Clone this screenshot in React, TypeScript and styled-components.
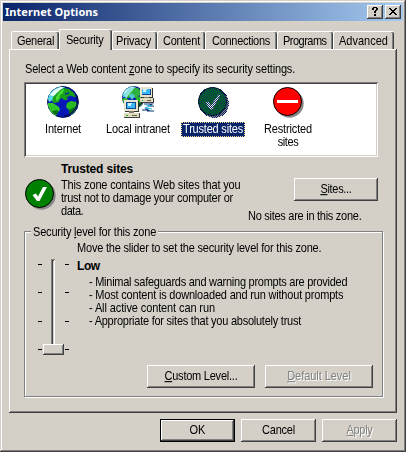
import React from "react";
import styled, { createGlobalStyle, css } from "styled-components";

const face = "#d4d0c8";
const shadow = "#808080";
const dark = "#404040";

const raised = css`
  box-shadow: inset -1px -1px 0 ${dark}, inset 1px 1px 0 #fff, inset -2px -2px 0 ${shadow};
`;

const Global = createGlobalStyle`
  body { margin: 0; background: ${face}; }
  * { box-sizing: border-box; }
`;

const Window = styled.div`
  width: 406px;
  height: 452px;
  padding: 3px;
  background: ${face};
  color: #000;
  font: 11px/13px "Liberation Sans", Arial, sans-serif;
  box-shadow: inset -1px -1px 0 ${dark}, inset 1px 1px 0 ${face}, inset -2px -2px 0 ${shadow}, inset 2px 2px 0 #fff;
`;

const Text = styled.span<{ $ls?: number; $bold?: boolean }>`
  display: block;
  width: max-content;
  white-space: nowrap;
  letter-spacing: ${(p) => p.$ls ?? -0.2}px;
  font-size: ${(p) => (p.$bold ? 12 : 11)}px;
  font-weight: ${(p) => (p.$bold ? 700 : 400)};
  transform: scaleY(${(p) => (p.$bold ? 1 : 1.1)});
  transform-origin: 0 10px;
`;

const Key = styled.span`
  text-decoration: underline;
  text-decoration-thickness: 1px;
  text-underline-offset: 1px;
  text-decoration-skip-ink: none;
`;

const TitleBar = styled.header`
  display: flex;
  align-items: center;
  height: 18px;
  padding: 0 2px;
  background: linear-gradient(90deg, #0a246a, #a6caf0);
`;

const Title = styled.h1`
  flex: 1;
  margin: 0;
  color: #fff;
  font: bold 11px/16px "Noto Sans", sans-serif;
  letter-spacing: 0.05px;
`;

const CaptionButton = styled.button`
  width: 16px;
  height: 14px;
  margin-left: 2px;
  padding: 0;
  border: 0;
  background: ${face};
  ${raised}
  svg { display: block; }
`;

const Tabs = styled.nav`
  position: relative;
  z-index: 1;
  display: flex;
  align-items: flex-end;
  height: 29px;
  padding-left: 8px;
`;

const Tab = styled.div<{ $w: number; $pad: number; $on?: boolean }>`
  width: ${(p) => p.$w}px;
  height: ${(p) => (p.$on ? 21 : 18)}px;
  margin-bottom: ${(p) => (p.$on ? 0 : 1)}px;
  padding: ${(p) => (p.$on ? 4 : 3)}px 0 0 ${(p) => p.$pad - 1}px;
  background: ${face};
  border-top: 1px solid #fff;
  border-left: 1px solid #fff;
  border-radius: 2px 2px 0 0;
  box-shadow: inset -1px 0 0 ${dark}, inset -2px 0 0 ${shadow};
`;

const Panel = styled.main`
  width: 388px;
  height: 364px;
  margin: -1px 0 0 6px;
  padding: 14px 14px 0 15px;
  ${raised}
`;

const Intro = styled.div`
  padding-left: 1px;
`;

const ZoneList = styled.div`
  display: flex;
  gap: 1px;
  width: 354px;
  height: 75px;
  margin-top: 6px;
  padding: 4px 0 0 2px;
  background: #fff;
  box-shadow: inset 1px 1px 0 ${shadow}, inset -1px -1px 0 #fff, inset 2px 2px 0 ${dark}, inset -2px -2px 0 ${face};
`;

const Zone = styled.div`
  display: flex;
  flex-direction: column;
  align-items: center;
  width: 74px;
  svg { display: block; flex: none; }
`;

const ZoneLabel = styled.div<{ $on?: boolean }>`
  display: flex;
  flex-direction: column;
  align-items: center;
  width: ${(p) => (p.$on ? "64px" : "auto")};
  height: ${(p) => (p.$on ? "15px" : "auto")};
  margin-top: 4px;
  padding: 1px 0;
  color: ${(p) => (p.$on ? "#fff" : "#000")};
  background: ${(p) => (p.$on ? "#0a246a" : "transparent")};
  outline: ${(p) => (p.$on ? "1px dotted #f5db95" : "none")};
  outline-offset: -1px;
`;

const Details = styled.section`
  display: flex;
  width: 354px;
  height: 69px;
`;

const DetailIcon = styled.div`
  width: 37px;
  padding-top: 21px;
  svg { display: block; }
`;

const DetailText = styled.div`
  width: 187px;
  padding-top: 6px;
`;

const Description = styled.div`
  margin-top: 3px;
`;

const SitesColumn = styled.div`
  display: flex;
  flex: 1;
  flex-direction: column;
  align-items: flex-end;
  padding-top: 21px;
`;

const SitesNote = styled.div`
  width: 130px;
  margin-top: 9px;
`;

const Button = styled.button<{ $w: number; $default?: boolean }>`
  display: flex;
  justify-content: center;
  width: ${(p) => p.$w}px;
  height: 23px;
  padding: 5px 0 0;
  border: 0;
  background: ${face};
  color: #000;
  font: inherit;
  ${raised}
  ${(p) =>
    p.$default &&
    css`
      box-shadow: inset 0 0 0 1px #000, inset -2px -2px 0 ${dark}, inset 2px 2px 0 #fff, inset -3px -3px 0 ${shadow};
    `}
  &:disabled {
    color: ${shadow};
    text-shadow: 1px 1px 0 #fff;
  }
`;

const Group = styled.section`
  width: 359px;
  height: 166px;
  margin-top: 5px;
  border: 1px solid ${shadow};
  box-shadow: 1px 1px 0 #fff, inset 1px 1px 0 #fff;
`;

const Legend = styled.div`
  width: 127px;
  height: 13px;
  margin: -6px 0 0 6px;
  padding-left: 2px;
  background: ${face};
`;

const Level = styled.div`
  display: flex;
  height: 126px;
`;

const Slider = styled.div`
  position: relative;
  display: flex;
  width: 52px;
  padding: 20px 0 0 13px;
`;

const Ticks = styled.div`
  display: flex;
  flex-direction: column;
  justify-content: space-between;
  width: 4px;
  height: 86px;
  margin-top: 5px;
`;

const Tick = styled.i`
  height: 1px;
  background: #000;
`;

const Track = styled.div`
  width: 4px;
  height: 92px;
  margin: 0 10px 0 9px;
  background: ${face};
  box-shadow: inset 1px 1px 0 ${shadow}, inset -1px -1px 0 #fff, inset 2px 2px 0 ${dark};
`;

const Thumb = styled.div`
  position: absolute;
  left: 18px;
  top: 105px;
  width: 21px;
  height: 11px;
  background: ${face};
  ${raised}
`;

const LevelText = styled.div`
  padding-top: 3px;
`;

const LevelName = styled.div`
  margin-top: 5px;
`;

const Bullets = styled.div`
  margin: 3px 0 0 12px;
`;

const LevelButtons = styled.div`
  display: flex;
  gap: 10px;
  padding-left: 122px;
`;

const Footer = styled.footer`
  display: flex;
  justify-content: flex-end;
  gap: 6px;
  padding: 6px 6px 0 0;
`;

const Globe = () => (
  <>
    <circle cx="16" cy="16" r="15.4" fill="#0818b8" stroke="#001050" strokeWidth="1" />
    <path d="M1 13C2 7 7 2 13 1l5 0-4 4-5 4-1 4-6 3z" fill="#58dce8" />
    <path d="M2.500 9l5-5 6-3 3 0-4 4-6 5z" fill="#e8fff8" />
    <path d="M13 4l4-2 5 1 5 4 2 4-2 0-2-1-3 1-2 3-3 0-2-2-2 1-1 3-4 1-3-1 1-5z" fill="#18a018" />
    <path d="M9 11l4-6 4-2-1 4-3 2-1 4-3 2z" fill="#48d838" />
    <path d="M1 17l5 0 6 4 1 3-3 3-1 3-5-4-3-6z" fill="#30c828" />
    <path d="M5 25l6-1-1 5-3-1z" fill="#087010" />
    <path d="M20 17l4-2 5 1 2 2-3 7-4 4-2-5-3-3z" fill="#28b820" />
    <path d="M22 24l6-3-3 6-3 2z" fill="#087010" />
    <path d="M18 8l4-1M20 12l4-2" stroke="#0830a0" strokeWidth="1.5" />
    <path d="M29 9a15 15 0 0 1-12 21" fill="none" stroke="#000858" strokeWidth="1.3" />
  </>
);

const InternetIcon = () => (
  <svg width="32" height="32" viewBox="0 0 32 32"><Globe /></svg>
);

const Computer = () => (
  <g shapeRendering="crispEdges">
    <path d="M0 0h15v12H0z" fill="#e8e4cc" />
    <path d="M15 1h1v12H1v-1h14z" fill="#303030" />
    <path d="M2 2h11v8H2z" fill="#104890" />
    <path d="M3 3h9v6H3z" fill="#38b8f8" />
    <path d="M4 3h5v1H7v2H4z" fill="#c8f4ff" />
    <path d="M5 12h6v2H5z" fill="#807c68" />
    <path d="M0 14h16v4H0z" fill="#e0dcc0" />
    <path d="M0 18h16v1H0zM16 14h1v5h-1z" fill="#404040" />
    <path d="M9 16h5v1H9z" fill="#606048" />
    <path d="M2 16h2v1H2z" fill="#20b020" />
  </g>
);

const IntranetIcon = () => (
  <svg width="32" height="32" viewBox="0 0 32 32">
    <g transform="scale(.72)"><Globe /></g>
    <path d="M2 8l5-6 7-1-6 6-4 6z" fill="#90e0e0" />
    <path d="M11 3l5-1 3 5-4 6-4-2z" fill="#30b040" />
    <path d="M7 10l3-3 3 3-3 4z" fill="#50c8d8" />
    <g transform="translate(18 1) scale(.82)"><Computer /></g>
    <g transform="translate(2 14) scale(.94)"><Computer /></g>
    <path d="M22 18h8l-3 2h5M20 24h6l-3-2M25 25h7" fill="none" stroke="#083878" strokeWidth="1.2" />
    <path d="M24 19l5 1-6 2 7 1" fill="none" stroke="#38b8e8" />
  </svg>
);

// Checkerboard pixels of the selection colour, limited to a disc and its drop shadow.
const ditherPath = (() => {
  const inside = (x: number, y: number, cx: number, cy: number) =>
    (x + 0.5 - cx) ** 2 + (y + 0.5 - cy) ** 2 <= 14.5 ** 2;
  let d = "";
  for (let y = 0; y < 32; y++)
    for (let x = y % 2; x < 32; x += 2)
      if (inside(x, y, 15.5, 15.5) || inside(x, y, 17.5, 17.5)) d += `M${x} ${y}h1v1h-1z`;
  return d;
})();

const TrustedIcon = ({ selected }: { selected?: boolean }) => (
  <svg width="32" height="32" viewBox="0 0 32 32">
    <circle cx="17.5" cy="17.5" r="14.2" fill="#888" />
    <circle cx="15.5" cy="15.5" r="14" fill="#008000" stroke="#000" />
    {selected ? (
      <>
        <path d="M9 17l2-1 3 4L21.500 9h1.500L15 23h-1.500z" fill="#fff" stroke="#fff" strokeWidth=".8" />
        <path d={ditherPath} fill="#0a246a" shapeRendering="crispEdges" />
      </>
    ) : (
      <path d="M8.500 17l3.500-1.500 2 3L19 9l4 0-7.500 14h-2.500z" fill="#fff" />
    )}
  </svg>
);

const RestrictedIcon = () => (
  <svg width="32" height="32" viewBox="0 0 32 32">
    <circle cx="17.5" cy="17.5" r="14.2" fill="#888" />
    <circle cx="15.5" cy="15.5" r="14" fill="#f00" stroke="#000" />
    <path d="M5 14h21v3H5z" fill="#fff" shapeRendering="crispEdges" />
  </svg>
);

const tabs: { label: string; w: number; pad: number; ls: number; on?: boolean }[] = [
  { label: "General", w: 48, pad: 6, ls: -0.3 },
  { label: "Security", w: 53, pad: 7, ls: -0.28, on: true },
  { label: "Privacy", w: 45, pad: 4, ls: -0.15 },
  { label: "Content", w: 48, pad: 6, ls: -0.22 },
  { label: "Connections", w: 72, pad: 7, ls: -0.29 },
  { label: "Programs", w: 56, pad: 6, ls: -0.52 },
  { label: "Advanced", w: 61, pad: 6, ls: 0 },
];

export default function App() {
  return (
    <>
      <Global />
      <Window>
        <TitleBar>
          <Title>Internet Options</Title>
          <CaptionButton aria-label="Help">
            <svg width="16" height="14" viewBox="0 0 16 14" shapeRendering="crispEdges">
              <path d="M6 2h4v1H6zM5 3h2v2H5zM9 3h2v2H9zM8 5h2v1H8zM7 6h2v2H7zM7 9h2v2H7z" />
            </svg>
          </CaptionButton>
          <CaptionButton aria-label="Close">
            <svg width="16" height="14" viewBox="0 0 16 14" shapeRendering="crispEdges">
              <path d="M4 3h2v1H4zM10 3h2v1h-2zM5 4h2v1H5zM9 4h2v1H9zM6 5h4v1H6zM7 6h2v1H7zM6 7h4v1H6zM5 8h2v1H5zM9 8h2v1H9zM4 9h2v1H4zM10 9h2v1h-2z" />
            </svg>
          </CaptionButton>
        </TitleBar>
        <Tabs>
          {tabs.map((t) => (
            <Tab key={t.label} $w={t.w} $pad={t.pad} $on={t.on}>
              <Text $ls={t.ls}>{t.label}</Text>
            </Tab>
          ))}
        </Tabs>
        <Panel>
          <Intro>
            <Text $ls={-0.165}>Select a Web content <Key>z</Key>one to specify its security settings.</Text>
          </Intro>
          <ZoneList>
            <Zone>
              <InternetIcon />
              <ZoneLabel><Text $ls={-0.16}>Internet</Text></ZoneLabel>
            </Zone>
            <Zone>
              <IntranetIcon />
              <ZoneLabel><Text $ls={-0.15}>Local intranet</Text></ZoneLabel>
            </Zone>
            <Zone>
              <TrustedIcon selected />
              <ZoneLabel $on><Text $ls={-0.2}>Trusted sites</Text></ZoneLabel>
            </Zone>
            <Zone>
              <RestrictedIcon />
              <ZoneLabel>
                <Text $ls={-0.15}>Restricted</Text>
                <Text $ls={-0.42}>sites</Text>
              </ZoneLabel>
            </Zone>
          </ZoneList>
          <Details>
            <DetailIcon><TrustedIcon /></DetailIcon>
            <DetailText>
              <Text $bold $ls={-0.15}>Trusted sites</Text>
              <Description>
                <Text $ls={-0.15}>This zone contains Web sites that you</Text>
                <Text $ls={-0.25}>trust not to damage your computer or</Text>
                <Text $ls={-0.45}>data.</Text>
              </Description>
            </DetailText>
            <SitesColumn>
              <Button $w={84}><Text $ls={-0.3}><Key>S</Key>ites...</Text></Button>
              <SitesNote><Text $ls={-0.27}>No sites are in this zone.</Text></SitesNote>
            </SitesColumn>
          </Details>
          <Group>
            <Legend><Text $ls={-0.19}>Security <Key>l</Key>evel for this zone</Text></Legend>
            <Level>
              <Slider>
                <Ticks><Tick /><Tick /><Tick /><Tick /></Ticks>
                <Track />
                <Ticks><Tick /><Tick /><Tick /><Tick /></Ticks>
                <Thumb />
              </Slider>
              <LevelText>
                <Text $ls={-0.2}>Move the slider to set the security level for this zone.</Text>
                <LevelName><Text $bold $ls={-0.4}>Low</Text></LevelName>
                <Bullets>
                  <Text $ls={-0.26}>- Minimal safeguards and warning prompts are provided</Text>
                  <Text $ls={-0.19}>- Most content is downloaded and run without prompts</Text>
                  <Text $ls={-0.11}>- All active content can run</Text>
                  <Text $ls={-0.24}>- Appropriate for sites that you absolutely trust</Text>
                </Bullets>
              </LevelText>
            </Level>
            <LevelButtons>
              <Button $w={108}><Text $ls={-0.23}><Key>C</Key>ustom Level...</Text></Button>
              <Button $w={108} disabled><Text $ls={-0.05}><Key>D</Key>efault Level</Text></Button>
            </LevelButtons>
          </Group>
        </Panel>
        <Footer>
          <Button $w={75} $default><Text $ls={0.05}>OK</Text></Button>
          <Button $w={75}><Text $ls={-0.21}>Cancel</Text></Button>
          <Button $w={75} disabled><Text $ls={-0.3}><Key>A</Key>pply</Text></Button>
        </Footer>
      </Window>
    </>
  );
}
